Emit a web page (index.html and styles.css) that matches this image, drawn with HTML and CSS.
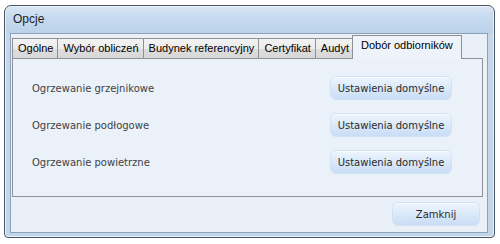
FILE: index.html
```html
<!DOCTYPE html>
<html lang="pl">
<head>
	<meta charset="UTF-8">
	<title>Opcje</title>
	<link rel="stylesheet" href="styles.css">
</head>
<body>
	<div class="window">
		<div class="title">Opcje</div>
		<div class="client">
			<ul class="tabs">
				<li>Ogólne</li>
				<li>Wybór obliczeń</li>
				<li>Budynek referencyjny</li>
				<li>Certyfikat</li>
				<li>Audyt</li>
				<li class="active">Dobór odbiorników</li>
			</ul>
			<div class="panel">
				<div class="row">
					<span class="label">Ogrzewanie grzejnikowe</span>
					<button class="btn">Ustawienia domyślne</button>
				</div>
				<div class="row">
					<span class="label">Ogrzewanie podłogowe</span>
					<button class="btn">Ustawienia domyślne</button>
				</div>
				<div class="row">
					<span class="label">Ogrzewanie powietrzne</span>
					<button class="btn">Ustawienia domyślne</button>
				</div>
			</div>
			<div class="footer">
				<button class="btn btn-close">Zamknij</button>
			</div>
		</div>
	</div>
</body>
</html>
```

FILE: styles.css
```css
body{
	margin: 0;
	background: #fff;
	font-family: "Liberation Sans", Arial, sans-serif;
}
.window{
	box-sizing: border-box;
	width: 491px;
	height: 233px;
	margin: 5px 0 0 4px;
	padding: 0 6px 4px 5px;
	border: 1px solid #4b5563;
	border-radius: 7px 7px 4px 4px;
	background: linear-gradient(to bottom, #d9e6f4 0, #c6d9ee 12px, #bcd2ea 27px, #c4d7ec 28px, #c1d5eb 100%);
	box-shadow: inset 0 0 0 1px #e8f0f9;
	display: flex;
	flex-direction: column;
}
.title{
	height: 27px;
	line-height: 27px;
	padding-left: 3px;
	font-size: 12px;
	color: #1e1e1e;
}
.client{
	flex: 1;
	min-height: 0;
	border: 1px solid #8da2ba;
	background: #e9f0f8;
	display: flex;
	flex-direction: column;
	padding: 1px 4px 0 1px;
}
.tabs{
	list-style: none;
	margin: 0;
	padding: 0;
	display: flex;
	align-items: flex-end;
	height: 23px;
	flex-shrink: 0;
	font-size: 11px;
	color: #000;
}
.tabs li{
	flex-shrink: 0;
	white-space: nowrap;
	height: 19px;
	line-height: 19px;
	padding: 0 4px 0 5px;
	border: 1px solid #8e9196;
	border-bottom: none;
	margin-right: -1px;
	background: linear-gradient(to bottom, #f3f3f3 0, #ebebeb 50%, #dddddd 51%, #d8d8d8 100%);
}
.tabs li.active{
	position: relative;
	height: 23px;
	line-height: 19px;
	margin: 0 -1px -1px -1px;
	padding: 0 8px 0 8px;
	background: #eef3fa;
	z-index: 1;
}
.panel{
	box-sizing: border-box;
	height: 139px;
	flex-shrink: 0;
	border: 1px solid #8e9196;
	background: #ebf1f9;
	padding: 17px 30px 0 19px;
	display: flex;
	flex-direction: column;
	gap: 13px;
}
.row{
	display: flex;
	align-items: center;
	justify-content: space-between;
	height: 24px;
}
.label{
	font-family: "DejaVu Sans", Verdana, sans-serif;
	font-size: 10px;
	color: #414141;
}
.btn{
	width: 122px;
	height: 24px;
	border: 1px solid #d3e2f3;
	border-radius: 6px;
	background: linear-gradient(to bottom, #eef5fd 0, #dceafa 45%, #c9ddf5 100%);
	box-shadow: inset 0 1px 0 #f8fbff;
	font-family: "DejaVu Sans", Verdana, sans-serif;
	font-size: 10px;
	color: #2a2a2a;
	padding: 0;
}
.footer{
	flex: 1;
	display: flex;
	justify-content: flex-end;
	align-items: flex-start;
	padding: 5px 3px 0 0;
}
.btn-close{
	width: 88px;
}
```
